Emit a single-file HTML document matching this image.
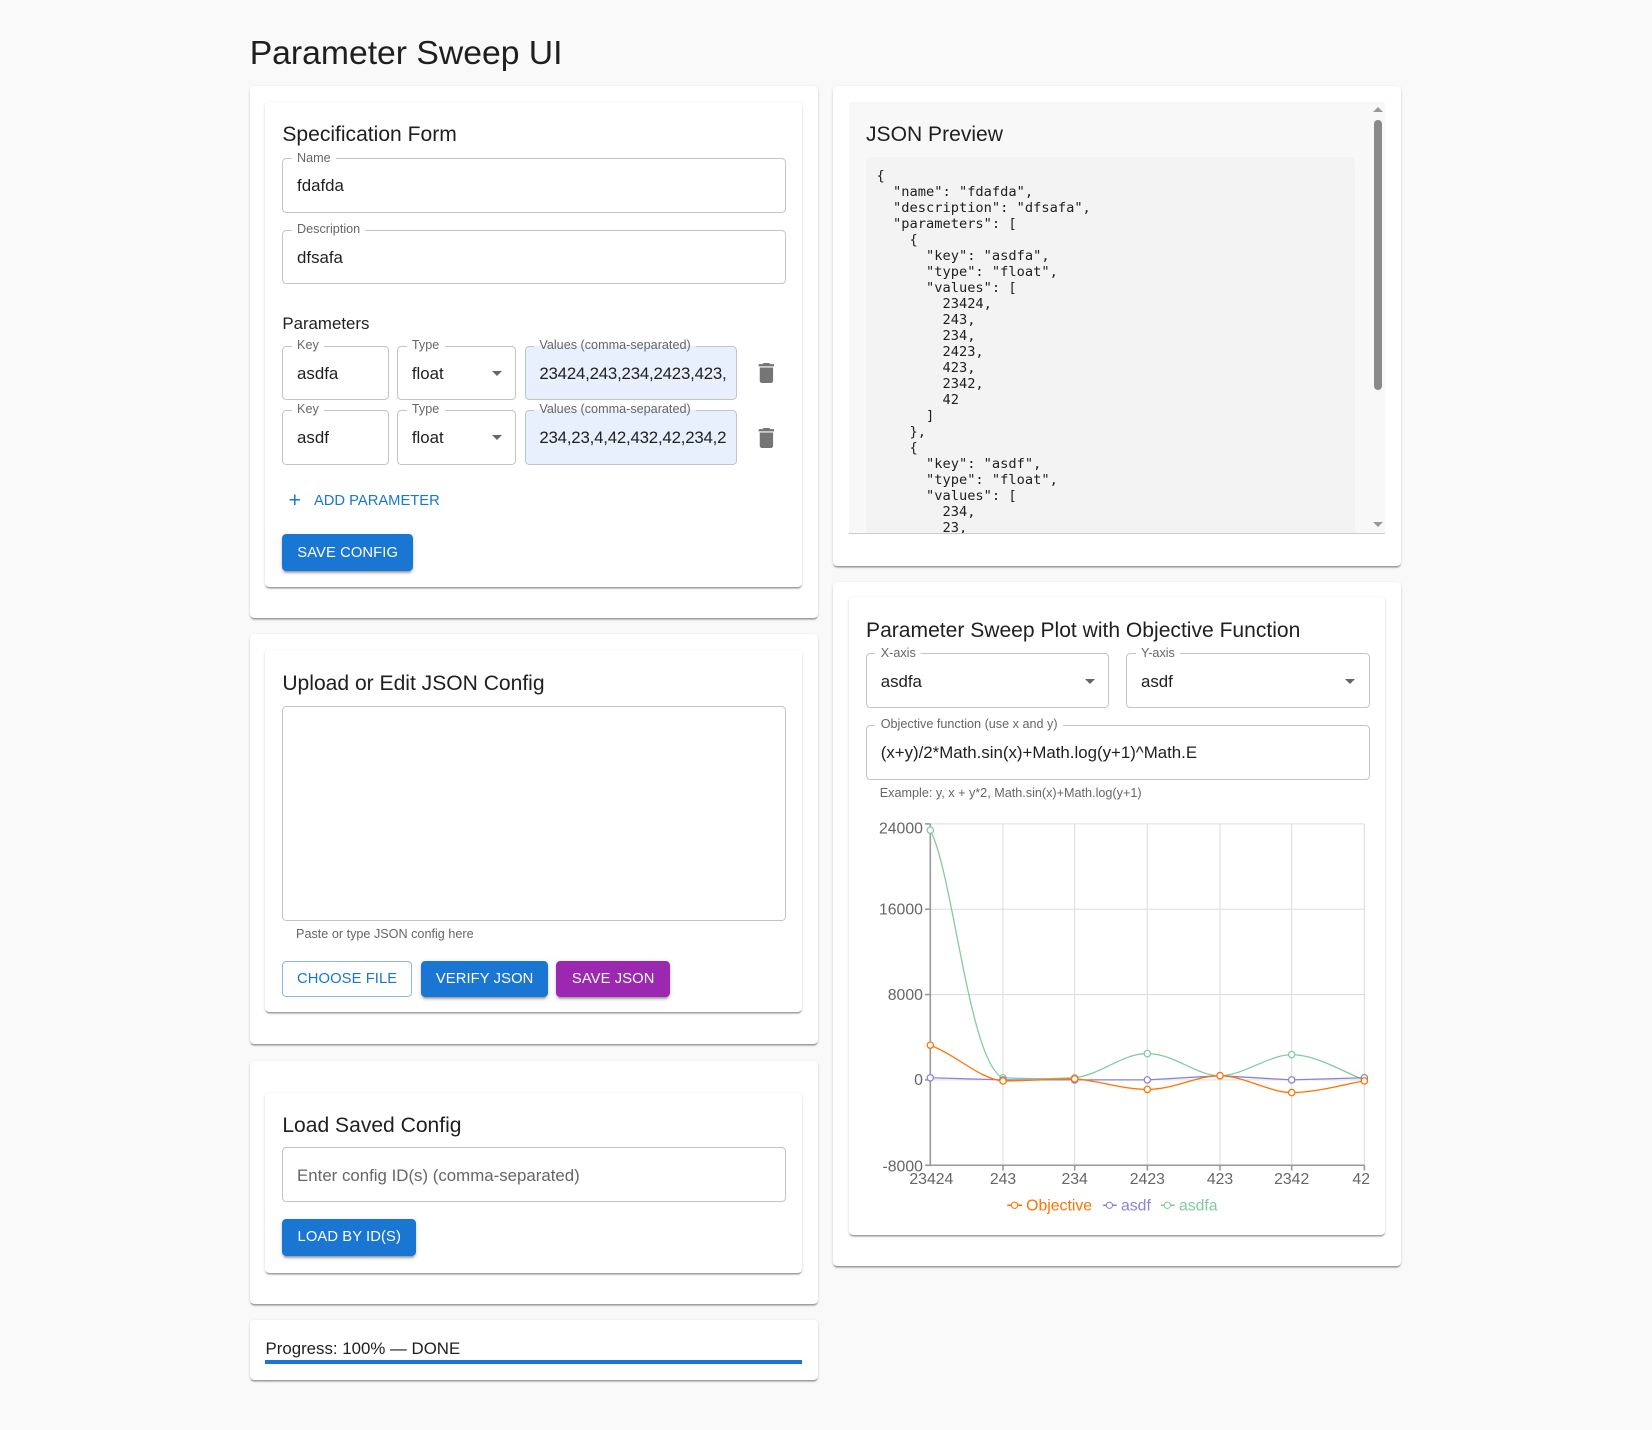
<!DOCTYPE html>
<html><head><meta charset="utf-8"><style>
*{box-sizing:border-box;margin:0;padding:0}
html,body{width:1652px;height:1430px;overflow:hidden;background:#f9f9f9}
#w{position:relative;width:1568px;height:1357px;zoom:1.05357;font-family:"Liberation Sans",sans-serif;color:#1f1f1f}
.a{position:absolute}
.card{position:absolute;background:#fff;border-radius:4px;box-shadow:0 2px 1px -1px rgba(0,0,0,.2),0 1px 1px 0 rgba(0,0,0,.14),0 1px 3px 0 rgba(0,0,0,.12)}
.h{position:absolute;font-size:20px;color:#1f1f1f;line-height:24px;top:1px}
.f{position:absolute;border:1px solid #c4c4c4;border-radius:4px;font-size:16px;padding-left:13px;padding-top:2px;display:flex;align-items:center;color:#1f1f1f}
.f .l{position:absolute;top:-8px;left:8px;font-size:12px;color:#666;background:#fff;padding:0 5px;line-height:14px}
.f.v{background:#e8f0fe}
.f.v .l{background:linear-gradient(#fff 50%,#e8f0fe 50%)}
.dd{position:absolute;right:13px;top:50%;margin-top:-2px;width:0;height:0;border-left:5px solid transparent;border-right:5px solid transparent;border-top:5px solid #666}
.btn{position:absolute;background:#1976d2;color:#fff;font-size:14px;letter-spacing:.1px;border-radius:4px;display:flex;align-items:center;justify-content:center;box-shadow:0 3px 1px -2px rgba(0,0,0,.2),0 2px 2px 0 rgba(0,0,0,.14),0 1px 5px 0 rgba(0,0,0,.12)}
pre{font-family:"DejaVu Sans Mono","Liberation Mono",monospace;font-size:13px;line-height:15.2px;color:#1f1f1f}
</style></head><body><div id="w">
<div class="a" style="left:237px;top:30px;font-size:32px;line-height:40px">Parameter Sweep UI</div>

<div class="card" style="left:237px;top:82px;width:539px;height:505px"></div>
<div class="card" style="left:252px;top:97px;width:509px;height:460px"></div>
<div class="h" style="left:268px;top:116px">Specification Form</div>
<div class="f" style="left:268px;top:150px;width:478px;height:52px"><span class="l">Name</span>fdafda</div>
<div class="f" style="left:268px;top:218px;width:478px;height:52px"><span class="l">Description</span>dfsafa</div>
<div class="a" style="left:268px;top:298px;font-size:16px">Parameters</div>
<div class="f" style="left:268px;top:328px;width:101px;height:52px"><span class="l">Key</span>asdfa</div>
<div class="f" style="left:377px;top:328px;width:113px;height:52px"><span class="l">Type</span>float<span class="dd"></span></div>
<div class="f v" style="left:498px;top:328px;width:202px;height:52px;white-space:nowrap"><span class="l">Values (comma-separated)</span><span style="overflow:hidden;width:180px;display:block;letter-spacing:-0.2px">23424,243,234,2423,423,</span></div>
<div class="f" style="left:268px;top:389px;width:101px;height:52px"><span class="l">Key</span>asdf</div>
<div class="f" style="left:377px;top:389px;width:113px;height:52px"><span class="l">Type</span>float<span class="dd"></span></div>
<div class="f v" style="left:498px;top:389px;width:202px;height:52px;white-space:nowrap"><span class="l">Values (comma-separated)</span><span style="overflow:hidden;width:178px;display:block;letter-spacing:-0.2px">234,23,4,42,432,42,234,2</span></div>
<svg class="a" style="left:719px;top:345px" width="16" height="19" viewBox="0 0 14 18"><path fill="#757575" d="M1 16c0 1.1.9 2 2 2h8c1.1 0 2-.9 2-2V4H1v12zM14 1h-3.5l-1-1h-5l-1 1H0v2h14V1z"/></svg>
<svg class="a" style="left:719px;top:406px" width="16" height="19" viewBox="0 0 14 18"><path fill="#757575" d="M1 16c0 1.1.9 2 2 2h8c1.1 0 2-.9 2-2V4H1v12zM14 1h-3.5l-1-1h-5l-1 1H0v2h14V1z"/></svg>
<div class="a" style="left:274px;top:465px;font-size:20px;color:#1976d2;line-height:20px">+</div>
<div class="a" style="left:298px;top:468px;font-size:14px;color:#1976d2;letter-spacing:0">ADD PARAMETER</div>
<div class="btn" style="left:268px;top:507px;width:124px;height:35px">SAVE CONFIG</div>

<div class="card" style="left:237px;top:602px;width:539px;height:389px"></div>
<div class="card" style="left:252px;top:617px;width:509px;height:344px"></div>
<div class="h" style="left:268px;top:637px">Upload or Edit JSON Config</div>
<div class="f" style="left:268px;top:670px;width:478px;height:204px"></div>
<div class="a" style="left:281px;top:880px;font-size:12px;color:#666">Paste or type JSON config here</div>
<div class="a" style="left:268px;top:912px;width:123px;height:34px;border:1px solid #8ab6e8;border-radius:4px;color:#1976d2;font-size:14px;letter-spacing:.1px;display:flex;align-items:center;justify-content:center">CHOOSE FILE</div>
<div class="btn" style="left:400px;top:912px;width:120px;height:34px">VERIFY JSON</div>
<div class="btn" style="left:528px;top:912px;width:108px;height:34px;background:#9c27b0">SAVE JSON</div>

<div class="card" style="left:237px;top:1007px;width:539px;height:231px"></div>
<div class="card" style="left:252px;top:1037px;width:509px;height:171px"></div>
<div class="h" style="left:268px;top:1056px">Load Saved Config</div>
<div class="f" style="left:268px;top:1089px;width:478px;height:52px;color:#666">Enter config ID(s) (comma-separated)</div>
<div class="btn" style="left:268px;top:1157px;width:127px;height:35px">LOAD BY ID(S)</div>

<div class="card" style="left:237px;top:1253px;width:539px;height:57px"></div>
<div class="a" style="left:252px;top:1271px;font-size:16px">Progress: 100% — DONE</div>
<div class="a" style="left:252px;top:1291px;width:509px;height:4px;background:#1976d2"></div>

<div class="card" style="left:791px;top:82px;width:539px;height:455px"></div>
<div class="a" style="left:806px;top:97px;width:509px;height:410px;background:#f8f8f8;border-bottom:1px solid #ccc;overflow:hidden">
<div class="h" style="left:16px;top:19px">JSON Preview</div>
<div class="a" style="left:16px;top:52px;width:464px;height:370px;background:#f3f3f3;border-radius:4px;overflow:hidden">
<pre style="position:absolute;left:10px;top:10px">{
  "name": "fdafda",
  "description": "dfsafa",
  "parameters": [
    {
      "key": "asdfa",
      "type": "float",
      "values": [
        23424,
        243,
        234,
        2423,
        423,
        2342,
        42
      ]
    },
    {
      "key": "asdf",
      "type": "float",
      "values": [
        234,
        23,
        4</pre></div>
<div class="a" style="left:498px;top:17px;width:8px;height:256px;background:#8a8a8a;border-radius:4px"></div>
<div class="a" style="left:497px;top:5px;border-left:5px solid transparent;border-right:5px solid transparent;border-bottom:5px solid #999"></div>
<div class="a" style="left:497px;top:398px;border-left:5px solid transparent;border-right:5px solid transparent;border-top:5px solid #999"></div>
</div>

<div class="card" style="left:791px;top:552px;width:539px;height:650px"></div>
<div class="card" style="left:806px;top:567px;width:509px;height:605px"></div>
<div class="h" style="left:822px;top:587px">Parameter Sweep Plot with Objective Function</div>
<div class="f" style="left:822px;top:620px;width:231px;height:52px"><span class="l">X-axis</span>asdfa<span class="dd"></span></div>
<div class="f" style="left:1069px;top:620px;width:231px;height:52px"><span class="l">Y-axis</span>asdf<span class="dd"></span></div>
<div class="f" style="left:822px;top:688px;width:478px;height:52px"><span class="l">Objective function (use x and y)</span>(x+y)/2*Math.sin(x)+Math.log(y+1)^Math.E</div>
<div class="a" style="left:835px;top:746px;font-size:12px;color:#666">Example: y, x + y*2, Math.sin(x)+Math.log(y+1)</div>
<svg class="a" style="left:0;top:0" width="1568" height="1357" font-family="Liberation Sans,sans-serif" font-size="15">
<g stroke="#ddd" stroke-width="1">
<line x1="883" y1="782" x2="1295" y2="782"/><line x1="883" y1="863" x2="1295" y2="863"/><line x1="883" y1="944" x2="1295" y2="944"/><line x1="883" y1="1025" x2="1295" y2="1025"/>
<line x1="952" y1="782" x2="952" y2="1106"/><line x1="1020" y1="782" x2="1020" y2="1106"/><line x1="1089" y1="782" x2="1089" y2="1106"/><line x1="1158" y1="782" x2="1158" y2="1106"/><line x1="1226" y1="782" x2="1226" y2="1106"/><line x1="1295" y1="782" x2="1295" y2="1106"/>
</g>
<g stroke="#999" stroke-width="1.5"><line x1="883" y1="782" x2="883" y2="1107"/><line x1="883" y1="1106" x2="1295" y2="1106"/>
<line x1="878" y1="782" x2="883" y2="782"/><line x1="878" y1="863" x2="883" y2="863"/><line x1="878" y1="944" x2="883" y2="944"/><line x1="878" y1="1025" x2="883" y2="1025"/><line x1="878" y1="1106" x2="883" y2="1106"/>
<line x1="952" y1="1106" x2="952" y2="1111"/><line x1="1020" y1="1106" x2="1020" y2="1111"/><line x1="1089" y1="1106" x2="1089" y2="1111"/><line x1="1158" y1="1106" x2="1158" y2="1111"/><line x1="1226" y1="1106" x2="1226" y2="1111"/><line x1="1295" y1="1106" x2="1295" y2="1111"/></g>
<g fill="#666" text-anchor="end"><text x="876" y="791">24000</text><text x="876" y="868">16000</text><text x="876" y="949">8000</text><text x="876" y="1030">0</text><text x="876" y="1112">-8000</text></g>
<g fill="#666" text-anchor="middle"><text x="884" y="1124">23424</text><text x="952" y="1124">243</text><text x="1020" y="1124">234</text><text x="1089" y="1124">2423</text><text x="1158" y="1124">423</text><text x="1226" y="1124">2342</text><text x="1292" y="1124">42</text></g>
<g fill="none" stroke-width="1.2">
<path stroke="#82ca9d" d="M883 788C905 830 920 1010 952 1023C975 1024 1000 1024 1020 1023C1045 1020 1065 1000 1089 1000C1115 1000 1135 1021 1158 1021C1180 1021 1205 1001 1226 1001C1250 1001 1280 1020 1295 1025"/>
<path stroke="#8884d8" d="M883 1023L952 1025L1020 1025L1089 1025L1158 1021L1226 1025L1295 1023"/>
<path stroke="#ff7300" d="M883 992C910 1003 930 1024 952 1026C975 1026 1000 1024 1020 1024C1045 1026 1065 1034 1089 1034C1115 1034 1135 1021 1158 1021C1180 1021 1205 1037 1226 1037C1250 1037 1280 1028 1295 1026"/>
</g>
<g fill="#fff" stroke-width="1.2">
<g stroke="#82ca9d"><circle cx="883" cy="788" r="3"/><circle cx="952" cy="1023" r="3"/><circle cx="1020" cy="1023" r="3"/><circle cx="1089" cy="1000" r="3"/><circle cx="1158" cy="1021" r="3"/><circle cx="1226" cy="1001" r="3"/><circle cx="1295" cy="1024" r="3"/></g>
<g stroke="#8884d8"><circle cx="883" cy="1023" r="3"/><circle cx="952" cy="1025" r="3"/><circle cx="1020" cy="1025" r="3"/><circle cx="1089" cy="1025" r="3"/><circle cx="1158" cy="1021" r="3"/><circle cx="1226" cy="1025" r="3"/><circle cx="1295" cy="1023" r="3"/></g>
<g stroke="#ff7300"><circle cx="883" cy="992" r="3"/><circle cx="952" cy="1026" r="3"/><circle cx="1020" cy="1024" r="3"/><circle cx="1089" cy="1034" r="3"/><circle cx="1158" cy="1021" r="3"/><circle cx="1226" cy="1037" r="3"/><circle cx="1295" cy="1026" r="3"/></g>
</g>
<g font-size="15">
<line x1="956" y1="1144" x2="970" y2="1144" stroke="#ff7300" stroke-width="1.5"/><circle cx="963" cy="1144" r="3" fill="#fff" stroke="#ff7300"/><text x="974" y="1149" fill="#ff7300">Objective</text>
<line x1="1047" y1="1144" x2="1060" y2="1144" stroke="#8884d8" stroke-width="1.5"/><circle cx="1053" cy="1144" r="3" fill="#fff" stroke="#8884d8"/><text x="1064" y="1149" fill="#8884d8">asdf</text>
<line x1="1102" y1="1144" x2="1115" y2="1144" stroke="#82ca9d" stroke-width="1.5"/><circle cx="1108" cy="1144" r="3" fill="#fff" stroke="#82ca9d"/><text x="1119" y="1149" fill="#82ca9d">asdfa</text>
</g>
</svg>
</div></body></html>
